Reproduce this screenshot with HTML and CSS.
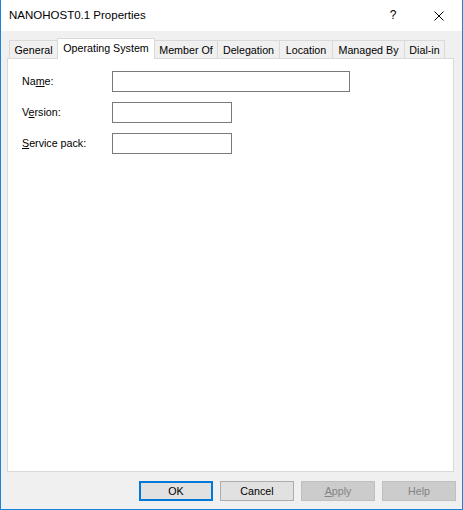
FILE: index.html
```html
<!DOCTYPE html>
<html>
<head>
<meta charset="utf-8">
<link rel="stylesheet" href="styles.css">
</head>
<body>
<div class="window">
  <div class="titlebar">
    <div class="title">NANOHOST0.1 Properties</div>
    <div class="cap-btn help-btn">?</div>
    <div class="cap-btn close-btn">
      <svg width="10" height="10" viewBox="0 0 10 10"><path d="M0.5 0.5 L9.5 9.5 M9.5 0.5 L0.5 9.5" stroke="#000" stroke-width="1" fill="none"/></svg>
    </div>
  </div>
  <div class="content">
    <div class="tabstrip">
      <div class="tab t-general">General</div>
      <div class="tab t-os selected">Operating System</div>
      <div class="tab t-member">Member Of</div>
      <div class="tab t-deleg">Delegation</div>
      <div class="tab t-loc">Location</div>
      <div class="tab t-managed">Managed By</div>
      <div class="tab t-dial">Dial-in</div>
    </div>
    <div class="panel">
      <div class="form">
        <label class="lbl">Na<u>m</u>e:</label>
        <div class="input wide"></div>
        <label class="lbl">V<u>e</u>rsion:</label>
        <div class="input narrow"></div>
        <label class="lbl"><u>S</u>ervice pack:</label>
        <div class="input narrow"></div>
      </div>
    </div>
    <div class="buttons">
      <div class="btn default">OK</div>
      <div class="btn">Cancel</div>
      <div class="btn disabled"><u>A</u>pply</div>
      <div class="btn disabled">Help</div>
    </div>
  </div>
</div>
</body>
</html>
```
FILE: styles.css
```css
html, body {
  margin: 0;
  padding: 0;
  background: #ffffff;
}
.window {
  width: 463px;
  height: 510px;
  box-sizing: border-box;
  border-left: 1px solid #1883d7;
  border-right: 1px solid #1883d7;
  border-bottom: 1px solid #1883d7;
  background: #f0f0f0;
  font-family: "Liberation Sans", Arial, sans-serif;
  font-size: 10.7px;
  color: #000;
  display: flex;
  flex-direction: column;
}
.titlebar {
  height: 31px;
  background: #ffffff;
  display: flex;
  align-items: center;
}
.title {
  flex: 1;
  padding-left: 8px;
  font-size: 11.5px;
  padding-bottom: 1px;
}
.cap-btn {
  width: 46px;
  height: 31px;
  display: flex;
  align-items: center;
  justify-content: center;
}
.help-btn {
  font-size: 12px;
  padding-bottom: 1px;
  box-sizing: border-box;
}
.content {
  flex: 1;
  display: flex;
  flex-direction: column;
  padding: 7px 8px 0 6px;
}
.tabstrip {
  height: 20px;
  display: flex;
  align-items: flex-end;
  margin-left: 2px;
}
.tab {
  box-sizing: border-box;
  height: 18px;
  border: 1px solid #d9d9d9;
  border-bottom: none;
  background: #f0f0f0;
  margin-right: -1px;
  display: flex;
  align-items: center;
  justify-content: center;
  padding-top: 1px;
  white-space: nowrap;
}
.tab.selected {
  height: 21px;
  margin-bottom: -1px;
  background: #ffffff;
  position: relative;
  z-index: 1;
  padding-top: 0;
  padding-bottom: 2px;
}
.t-general { width: 49px; }
.t-os { width: 98px; }
.t-member { width: 64px; }
.t-deleg { width: 63px; }
.t-loc { width: 54px; }
.t-managed { width: 73px; }
.t-dial { width: 41px; }
.panel {
  box-sizing: border-box;
  height: 414px;
  border: 1px solid #d9d9d9;
  background: #ffffff;
  padding: 12px 0 0 14px;
}
.form {
  display: grid;
  grid-template-columns: 90px auto;
  row-gap: 10px;
  align-items: center;
  justify-items: start;
}
.lbl {
  display: block;
  padding-bottom: 1px;
}
.input {
  box-sizing: border-box;
  height: 21px;
  border: 1px solid #7a7a7a;
  background: #fff;
}
.input.wide { width: 238px; }
.input.narrow { width: 120px; }
.buttons {
  margin-top: 9px;
  margin-right: -2px;
  display: flex;
  justify-content: flex-end;
  gap: 7px;
}
.btn {
  box-sizing: border-box;
  width: 74px;
  height: 20px;
  border: 1px solid #adadad;
  background: #e1e1e1;
  display: flex;
  align-items: center;
  justify-content: center;
}
.btn.default {
  border: 2px solid #0078d7;
}
.btn.disabled {
  background: #cccccc;
  border-color: #bfbfbf;
  color: #838383;
}
```
